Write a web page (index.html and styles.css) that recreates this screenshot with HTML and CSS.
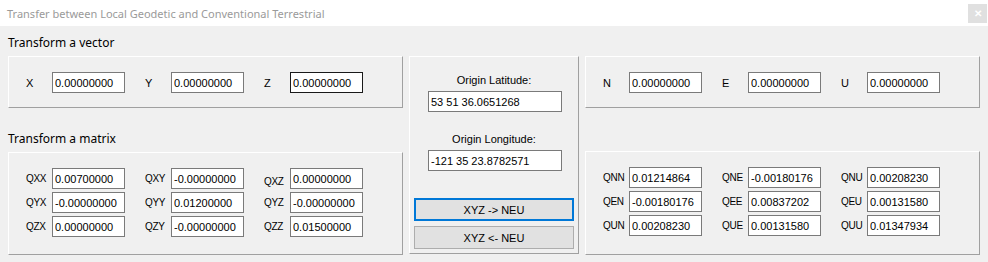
FILE: index.html
```html
<!DOCTYPE html>
<html lang="en">
<head>
    <meta charset="UTF-8">
    <meta name="viewport" content="width=device-width, initial-scale=1.0">
    <title>Transfer between Local Geodetic and Conventional Terrestrial</title>

    <link rel="stylesheet" href="styles.css">
</head>
<body>
    <div class="titlebar">
        <span class="title">Transfer between Local Geodetic and Conventional Terrestrial</span>
        <button class="close" aria-label="Close">&#x2715;</button>
    </div>

    <div class="content">
        <h2 class="heading vector-heading">Transform a vector</h2>

        <div class="box vector-left">
            <div class="row">
                <label class="field"><span class="lbl">X</span><input type="text" value="0.00000000"></label>
                <label class="field"><span class="lbl">Y</span><input type="text" value="0.00000000"></label>
                <label class="field"><span class="lbl">Z</span><input type="text" value="0.00000000" class="active"></label>
            </div>
        </div>

        <div class="box origin">
            <label for="lat" class="origin-lbl">Origin Latitude:</label>
            <input type="text" id="lat" value="53 51 36.0651268">
            <label for="lon" class="origin-lbl lon-lbl">Origin Longitude:</label>
            <input type="text" id="lon" value="-121 35 23.8782571">
            <button class="btn focused" id="toNeu">XYZ -&gt; NEU</button>
            <button class="btn" id="toXyz">XYZ &lt;- NEU</button>
        </div>

        <div class="box vector-right">
            <div class="row">
                <label class="field"><span class="lbl">N</span><input type="text" value="0.00000000"></label>
                <label class="field"><span class="lbl">E</span><input type="text" value="0.00000000"></label>
                <label class="field"><span class="lbl">U</span><input type="text" value="0.00000000"></label>
            </div>
        </div>

        <h2 class="heading matrix-heading">Transform a matrix</h2>

        <div class="box matrix matrix-left">
            <div class="row">
                <label class="field"><span class="lbl">QXX</span><input type="text" value="0.00700000"></label>
                <label class="field"><span class="lbl">QXY</span><input type="text" value="-0.00000000"></label>
                <label class="field"><span class="lbl low">QXZ</span><input type="text" value="0.00000000"></label>
            </div>
            <div class="row">
                <label class="field"><span class="lbl">QYX</span><input type="text" value="-0.00000000"></label>
                <label class="field"><span class="lbl">QYY</span><input type="text" value="0.01200000"></label>
                <label class="field"><span class="lbl">QYZ</span><input type="text" value="-0.00000000"></label>
            </div>
            <div class="row">
                <label class="field"><span class="lbl">QZX</span><input type="text" value="0.00000000"></label>
                <label class="field"><span class="lbl">QZY</span><input type="text" value="-0.00000000"></label>
                <label class="field"><span class="lbl">QZZ</span><input type="text" value="0.01500000"></label>
            </div>
        </div>

        <div class="box matrix matrix-right">
            <div class="row">
                <label class="field"><span class="lbl">QNN</span><input type="text" value="0.01214864"></label>
                <label class="field"><span class="lbl">QNE</span><input type="text" value="-0.00180176"></label>
                <label class="field"><span class="lbl">QNU</span><input type="text" value="0.00208230"></label>
            </div>
            <div class="row">
                <label class="field"><span class="lbl">QEN</span><input type="text" value="-0.00180176"></label>
                <label class="field"><span class="lbl">QEE</span><input type="text" value="0.00837202"></label>
                <label class="field"><span class="lbl">QEU</span><input type="text" value="0.00131580"></label>
            </div>
            <div class="row">
                <label class="field"><span class="lbl">QUN</span><input type="text" value="0.00208230"></label>
                <label class="field"><span class="lbl">QUE</span><input type="text" value="0.00131580"></label>
                <label class="field"><span class="lbl">QUU</span><input type="text" value="0.01347934"></label>
            </div>
        </div>
    </div>
</body>
</html>
```

FILE: styles.css
```css
body {
    margin: 0;
    background: #f0f0f0;
    font-family: "Liberation Sans", Arial, sans-serif;
    font-size: 11px;
    color: #000;
}

.titlebar {
    height: 26px;
    background: #fff;
    display: flex;
    align-items: center;
    padding: 0 1px 0 7px;
}
.title {
    font-family: "Noto Sans", sans-serif;
    font-size: 11px;
    color: #9a9a9a;
    flex: 1;
}
.close {
    width: 19px;
    height: 19px;
    border: none;
    padding: 0;
    background: #e0e0e0;
    color: #fff;
    font-size: 10px;
    font-weight: bold;
    line-height: 19px;
}

.content {
    display: grid;
    grid-template-columns: 395px 170px 395px;
    grid-template-rows: 30px 52px 44px 103px;
    column-gap: 6px;
    padding-left: 8px;
}

.heading {
    margin: 0;
    font-family: "Noto Sans", sans-serif;
    font-size: 12px;
    font-weight: normal;
    line-height: 16px;
    align-self: end;
    padding-bottom: 5px;
}
.vector-heading { grid-column: 1; grid-row: 1; }
.matrix-heading { grid-column: 1; grid-row: 3; }

.box {
    box-sizing: border-box;
    border-top: 1px solid #fff;
    border-left: 1px solid #fff;
    border-right: 1px solid #a0a0a0;
    border-bottom: 1px solid #a0a0a0;
}
.vector-left { grid-column: 1; grid-row: 2; padding: 15px 0 0 17px; }
.vector-right { grid-column: 3; grid-row: 2; padding: 15px 0 0 17px; }
.matrix-left { grid-column: 1; grid-row: 4; }
.matrix-right { grid-column: 3; grid-row: 4; margin-top: -1px; }
.matrix {
    padding: 15px 0 0 17px;
    display: flex;
    flex-direction: column;
    gap: 3px;
}
.matrix .lbl {
    font-size: 10px;
    letter-spacing: -0.3px;
}

.row {
    display: flex;
    gap: 20px;
}
.field {
    display: flex;
    align-items: center;
}
.lbl {
    width: 26px;
}
.lbl.low {
    padding-top: 5px;
}

input {
    box-sizing: border-box;
    width: 73px;
    height: 21px;
    margin: 0;
    padding: 0 2px;
    border: 1px solid #7a7a7a;
    background: #fff;
    font-family: "Liberation Sans", Arial, sans-serif;
    font-size: 11px;
    color: #000;
    outline: none;
}
input.active {
    border-color: #1a1a1a;
}

.origin {
    grid-column: 2;
    grid-row: 2 / 5;
    margin-bottom: 1px;
    display: flex;
    flex-direction: column;
    align-items: center;
    padding-top: 16px;
}
.origin-lbl {
    line-height: 14px;
    margin-bottom: 4px;
}
.lon-lbl {
    margin-top: 20px;
}
.origin input {
    width: 134px;
    margin-left: 2px;
}
.btn {
    box-sizing: border-box;
    width: 160px;
    height: 23px;
    margin: 0;
    border: 1px solid #adadad;
    background: #e1e1e1;
    font-family: "Liberation Sans", Arial, sans-serif;
    font-size: 11px;
    color: #000;
    padding: 0;
}
.btn.focused {
    border: 2px solid #0078d7;
    margin-top: 27px;
    margin-bottom: 5px;
}
```
